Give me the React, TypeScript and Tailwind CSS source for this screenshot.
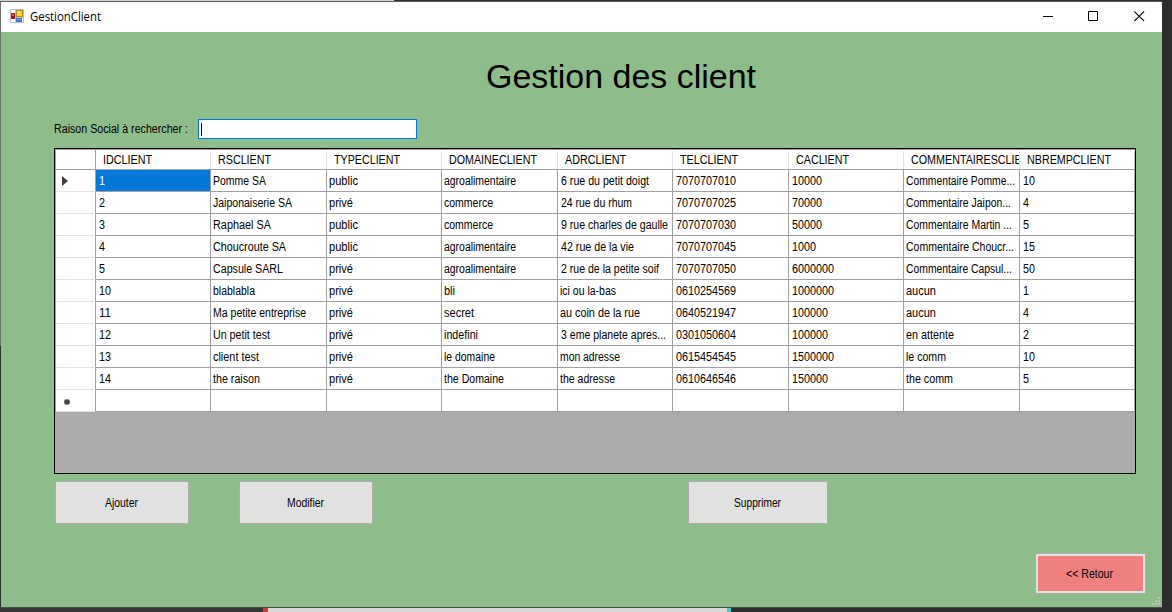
import { useLayoutEffect, useRef, useState } from "react";

const ROW =
  "grid grid-cols-[40px_115px_116px_115px_116px_115px_116px_115px_116px_115px]";

type Cell = [string, number];

const headers: Cell[] = [
  ["IDCLIENT", 49], ["RSCLIENT", 53], ["TYPECLIENT", 66], ["DOMAINECLIENT", 88], ["ADRCLIENT", 61],
  ["TELCLIENT", 58], ["CACLIENT", 53], ["COMMENTAIRESCLIENT", 125], ["NBREMPCLIENT", 84],
];

const rows: Cell[][] = [
  [["1", 6], ["Pomme SA", 53], ["public", 29], ["agroalimentaire", 72], ["6 rue du petit doigt", 88], ["7070707010", 60], ["10000", 30], ["Commentaire Pomme...", 109], ["10", 12]],
  [["2", 6], ["Jaiponaiserie SA", 79], ["privé", 24], ["commerce", 49], ["24 rue du rhum", 71], ["7070707025", 60], ["70000", 30], ["Commentaire Jaipon...", 105], ["4", 6]],
  [["3", 6], ["Raphael SA", 58], ["public", 29], ["commerce", 49], ["9 rue charles de gaulle", 107], ["7070707030", 60], ["50000", 30], ["Commentaire Martin ...", 106], ["5", 6]],
  [["4", 6], ["Choucroute SA", 73], ["public", 29], ["agroalimentaire", 72], ["42 rue de la vie", 73], ["7070707045", 60], ["1000", 24], ["Commentaire Choucr...", 108], ["15", 12]],
  [["5", 6], ["Capsule SARL", 70], ["privé", 24], ["agroalimentaire", 72], ["2 rue de la petite soif", 98], ["7070707050", 60], ["6000000", 42], ["Commentaire Capsul...", 106], ["50", 12]],
  [["10", 12], ["blablabla", 42], ["privé", 24], ["bli", 11], ["ici ou la-bas", 56], ["0610254569", 60], ["1000000", 42], ["aucun", 30], ["1", 6]],
  [["11", 12], ["Ma petite entreprise", 93], ["privé", 24], ["secret", 30], ["au coin de la rue", 80], ["0640521947", 60], ["100000", 36], ["aucun", 30], ["4", 6]],
  [["12", 12], ["Un petit test", 57], ["privé", 24], ["indefini", 34], ["3 eme planete apres...", 105], ["0301050604", 60], ["100000", 36], ["en attente", 48], ["2", 6]],
  [["13", 12], ["client test", 46], ["privé", 24], ["le domaine", 51], ["mon adresse", 60], ["0615454545", 60], ["1500000", 42], ["le comm", 40], ["10", 12]],
  [["14", 12], ["the raison", 47], ["privé", 24], ["the Domaine", 60], ["the adresse", 55], ["0610646546", 60], ["150000", 36], ["the comm", 47], ["5", 6]],
];

/** A single line of text condensed or stretched to the given advance width. */
function Fit({ text, width }: { text: string; width: number }) {
  const ref = useRef<HTMLSpanElement>(null);
  const [scale, setScale] = useState(1);
  useLayoutEffect(() => {
    const el = ref.current;
    if (el && el.offsetWidth) setScale((s) => (width / el.getBoundingClientRect().width) * s);
  }, [width, text]);
  return (
    <span className="block shrink-0 text-left" style={{ width }}>
      <span
        ref={ref}
        className="inline-block origin-left whitespace-pre"
        style={{ transform: `scaleX(${scale})` }}
      >
        {text}
      </span>
    </span>
  );
}

function FormIcon() {
  return (
    <svg className="mb-[2px]" width="14" height="14" viewBox="0 0 14 14" shapeRendering="crispEdges">
      <rect width="14" height="14" fill="#bdbdbd" />
      <path d="M1 1h4v3H1zM1 10h4v3H1zM12 9h1v4h-1z" fill="#fff" />
      <rect x="1" y="4" width="4" height="6" fill="#a01818" />
      <rect x="2" y="5" width="2" height="2" fill="#e0665c" />
      <rect x="6" y="1" width="7" height="7" fill="#b98a10" />
      <rect x="7" y="2" width="5" height="5" fill="#ffcf3a" />
      <rect x="7" y="2" width="3" height="2" fill="#ffe48a" />
      <rect x="6" y="9" width="6" height="4" fill="#3c78d8" />
      <rect x="7" y="10" width="4" height="1" fill="#8ab8f8" />
    </svg>
  );
}

function TitleBar() {
  return (
    <header className="flex h-[30px] items-center bg-white pl-[9px]">
      <FormIcon />
      <div className="ml-[6px] font-['Open_Sans',sans-serif] text-[12px] leading-4">
        <Fit text="GestionClient" width={71} />
      </div>
      <svg className="mb-[2px] ml-auto mr-[17px]" width="103" height="12" viewBox="0 0 103 12" fill="none" stroke="#000">
        <path d="M1 6.5h10" />
        <path d="M46.5 1.5h9v9h-9z" />
        <path d="M92.3 1.3l9.8 9.8M102.1 1.3l-9.8 9.8" strokeWidth="1.1" />
      </svg>
    </header>
  );
}

function DataGrid() {
  return (
    <div className="ml-[53px] h-[326px] w-[1082px] border border-black bg-[#ababab]">
      <div className="border-l border-t border-[#a0a0a0]">
        <div className={`${ROW} h-[20px] border-b border-[#a0a0a0] bg-white`}>
          <div className="border-r border-[#a0a0a0]" />
          {headers.map(([text, width]) => (
            <div key={text} className="mt-px flex items-center overflow-hidden border-r border-[#e3e3e3] pl-[7px] leading-[18px] last:border-[#c0c0c0]">
              <Fit text={text} width={width} />
            </div>
          ))}
        </div>
        {rows.map((row, r) => (
          <div key={row[0][0]} className={`${ROW} h-[22px] bg-white`}>
            <div className="flex items-center border-b border-r border-b-[#e3e3e3] border-r-[#a0a0a0] pl-[6px] pt-px">
              {r === 0 && (
                <svg width="6" height="10" viewBox="0 0 6 10">
                  <path d="M0 0L6 5L0 10Z" fill="#404040" />
                </svg>
              )}
            </div>
            {row.map(([text, width], c) => (
              <div
                key={c}
                className={`flex items-center overflow-hidden border-b border-r border-[#a0a0a0] leading-5 ${
                  /^\d/.test(text) ? "pl-[3px]" : "pl-[2px]"
                } ${r === 0 && c === 0 ? "bg-[#0078d7] text-white" : ""}`}
              >
                <Fit text={text} width={width} />
              </div>
            ))}
          </div>
        ))}
        <div className={`${ROW} h-[22px] bg-white`}>
          <div className="flex items-center border-b border-r border-b-[#e3e3e3] border-r-[#a0a0a0] pl-[8px] pt-[3px]">
            <svg width="6" height="6" viewBox="0 0 6 6" stroke="#404040">
              <path d="M3 0v6M0 3h6M0.6 0.8l4.8 4.4M5.4 0.8l-4.8 4.4" strokeWidth="1.3" />
            </svg>
          </div>
          {headers.map(([text]) => (
            <div key={text} className="border-b border-r border-[#a0a0a0]" />
          ))}
        </div>
      </div>
    </div>
  );
}

function Button({ text, width, className }: { text: string; width: number; className: string }) {
  return (
    <button className={`flex h-[43px] items-center justify-center border border-[#adadad] bg-[#e1e1e1] pr-[2px] pt-px leading-4 ${className}`}>
      <Fit text={text} width={width} />
    </button>
  );
}

export default function App() {
  return (
    <div className="flex h-[612px] w-[1172px] flex-col overflow-hidden bg-[#2e2e2e] font-['Liberation_Sans',Arial,sans-serif] text-[12px] text-black">
      <div className="flex h-[2px] flex-col">
        <div className="h-px w-[394px] bg-[#d0d0d0]" />
        <div className="h-px w-[1162px] bg-[#5c5c5c]" />
      </div>
      <div className="flex h-[605px]">
        <div className="w-px">
          <div className="h-[344px] bg-[#707070]" />
        </div>
        <div className="flex w-[1161px] flex-col bg-[#8fbc8b]">
          <TitleBar />
          <h1 className="ml-[485px] mt-[24px] h-[40px] text-[34px] leading-[40px]">
            <Fit text="Gestion des client" width={270} />
          </h1>
          <div className="ml-[53px] mt-[23px] flex h-[20px] items-center leading-5">
            <Fit text="Raison Social à rechercher :" width={134} />
            <div className="ml-[10px] flex h-[20px] w-[219px] items-center border border-[#0078d7] bg-white pl-[2px]">
              <div className="h-[13px] w-px bg-black" />
            </div>
          </div>
          <div className="mt-[9px]">
            <DataGrid />
          </div>
          <div className="ml-[54px] mt-[7px] flex">
            <Button text="Ajouter" width={33} className="w-[134px]" />
            <Button text="Modifier" width={37} className="ml-[50px] w-[134px]" />
            <Button text="Supprimer" width={47} className="ml-[315px] w-[140px]" />
          </div>
          <div className="mt-[29px] flex h-[54px]">
            <button className="ml-[1034px] flex h-[41px] w-[111px] items-center justify-center border border-[#adadad] bg-[#e1e1e1] p-px">
              <span className="flex h-full w-full items-center justify-center border border-[#e1e1e1] bg-[#f08080] pr-[2px] leading-4">
                <Fit text="<< Retour" width={47} />
              </span>
            </button>
            <svg className="ml-auto mr-[2px] mt-[44px]" width="8" height="8" viewBox="0 0 8 8" fill="#bfbfbf" shapeRendering="crispEdges">
              <path d="M6 0h2v2h-2zM3 3h2v2h-2zM6 3h2v2h-2zM0 6h2v2h-2zM3 6h2v2h-2zM6 6h2v2h-2z" />
            </svg>
          </div>
        </div>
      </div>
      <div className="h-px w-[1162px] bg-[#4d4d4d]" />
      <div className="flex h-[4px]">
        <div className="w-[263px] bg-[#363636]" />
        <div className="w-[5px] bg-[#d23c41]" />
        <div className="w-[459px] bg-[#d8d8d8]" />
        <div className="w-[4px] bg-[#4cc8c8]" />
      </div>
    </div>
  );
}
